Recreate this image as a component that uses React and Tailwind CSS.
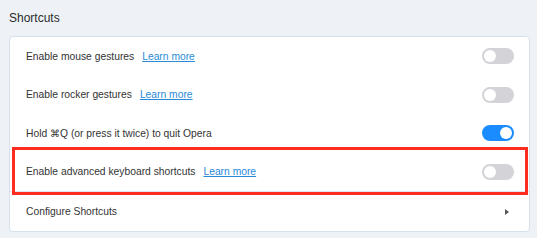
import React from "react";

const Toggle = ({ on }) => (
  <div
    className={`w-[32px] h-[16px] rounded-full flex items-center px-[2px] ${
      on ? "bg-[#1a8cff] justify-end" : "bg-[#d3d3d8] justify-start"
    }`}
  >
    <div className="w-[12px] h-[12px] rounded-full bg-white" />
  </div>
);

const LearnMore = () => (
  <a href="#" className="ml-[8px] text-[#2a8ad8] underline underline-offset-[1px]">
    Learn more
  </a>
);

const Row = ({ children, right, className = "" }) => (
  <div className={`h-[38.6px] flex items-center justify-between pl-[16px] pr-[15px] ${className}`}>
    <div className="flex items-center">{children}</div>
    {right}
  </div>
);

export default function App() {
  return (
    <div
      className="w-[537px] h-[238px] bg-[#eef2f7] pl-[9px] pr-[7px] pt-[10px] text-[#333]"
      style={{ fontFamily: '"Liberation Sans", Arial, sans-serif' }}
    >
      <div className="text-[12px] leading-[16px] mb-[10px] text-[#2b2b2b]">Shortcuts</div>
      <div className="bg-white border border-[#d7e1ec] rounded-[4px] text-[10.3px]">
        <Row right={<Toggle />}>
          <span>Enable mouse gestures</span>
          <LearnMore />
        </Row>
        <Row right={<Toggle />}>
          <span>Enable rocker gestures</span>
          <LearnMore />
        </Row>
        <Row right={<Toggle on />}>
          <span>Hold ⌘Q (or press it twice) to quit Opera</span>
        </Row>
        <div className="relative border-b border-[#dfe5ec]">
          <Row right={<Toggle />}>
            <span>Enable advanced keyboard shortcuts</span>
            <LearnMore />
          </Row>
          <div className="absolute -top-[6px] -bottom-[4px] left-[2px] right-[1px] border-[3px] border-[#ff2d1f] pointer-events-none" />
        </div>
        <Row
          className="h-[37.6px]"
          right={
            <div className="mr-[5px] w-0 h-0 border-y-[3.5px] border-y-transparent border-l-[4px] border-l-[#555]" />
          }
        >
          <span>Configure Shortcuts</span>
        </Row>
      </div>
    </div>
  );
}
